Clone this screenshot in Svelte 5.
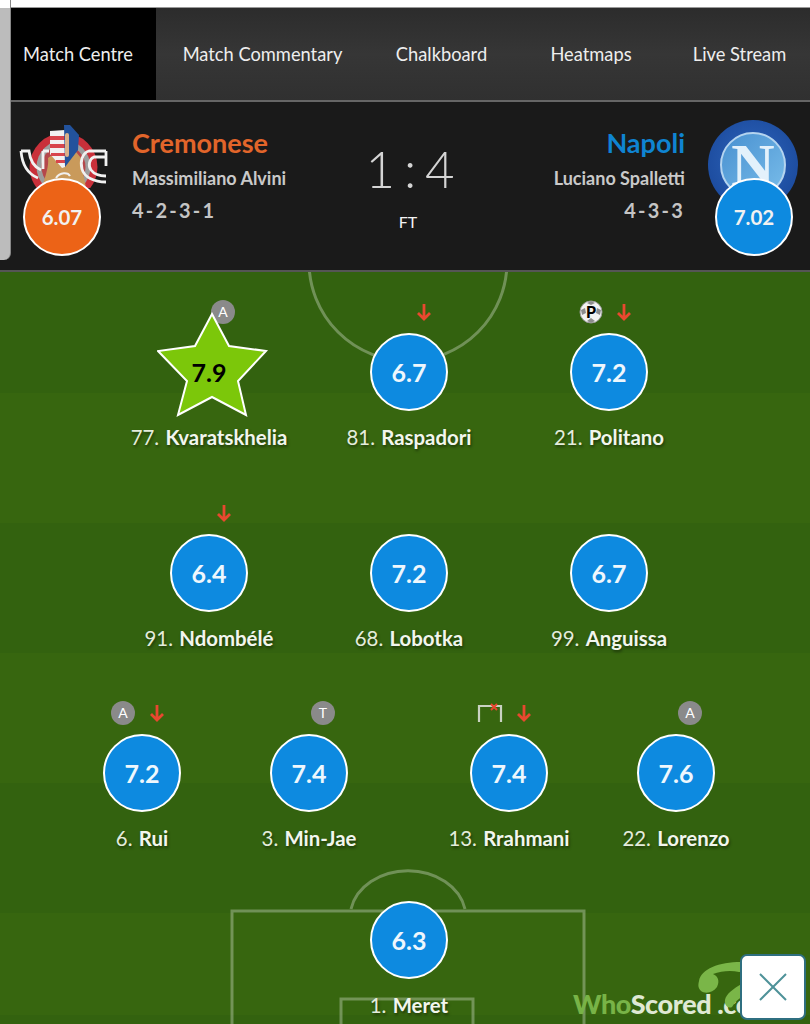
<script>
  const players = [
    { x: 209, y: 372, no: '77', name: 'Kvaratskhelia', rating: '7.9', star: true, icons: [{ k: 'A', d: 14 }] },
    { x: 409, y: 372, no: '81', name: 'Raspadori', rating: '6.7', icons: [{ k: 'arrow', d: 15 }] },
    { x: 609, y: 372, no: '21', name: 'Politano', rating: '7.2', icons: [{ k: 'ball', d: -18 }, { k: 'arrow', d: 15 }] },
    { x: 209, y: 573, no: '91', name: 'Ndombélé', rating: '6.4', icons: [{ k: 'arrow', d: 15 }] },
    { x: 409, y: 573, no: '68', name: 'Lobotka', rating: '7.2', icons: [] },
    { x: 609, y: 573, no: '99', name: 'Anguissa', rating: '6.7', icons: [] },
    { x: 142, y: 773, no: '6', name: 'Rui', rating: '7.2', icons: [{ k: 'A', d: -19 }, { k: 'arrow', d: 15 }] },
    { x: 309, y: 773, no: '3', name: 'Min-Jae', rating: '7.4', icons: [{ k: 'T', d: 14 }] },
    { x: 509, y: 773, no: '13', name: 'Rrahmani', rating: '7.4', icons: [{ k: 'post', d: -19 }, { k: 'arrow', d: 15 }] },
    { x: 676, y: 773, no: '22', name: 'Lorenzo', rating: '7.6', icons: [{ k: 'A', d: 14 }] },
    { x: 409, y: 940, no: '1', name: 'Meret', rating: '6.3', icons: [] }
  ];
  const tabs = ['Match Centre', 'Match Commentary', 'Chalkboard', 'Heatmaps', 'Live Stream'];
</script>

<div class="page">
  <div class="topstrip"></div>
  <div class="side"></div>

  <nav class="tabs">
    {#each tabs as t, i}
      <div class="tab" class:active={i === 0}>{t}</div>
    {/each}
  </nav>

  <header class="match">
    <div class="team home">
      <div class="crest">
        <svg width="92" height="66" viewBox="0 0 92 66">
          <circle cx="45.5" cy="45" r="34" fill="#c9303a" />
          <circle cx="45.5" cy="45" r="27" fill="#9d9d9d" />
          <circle cx="45.5" cy="45" r="22" fill="#b5474b" />
          <path d="M30 36 L38 30 L58 30 L63 36 C62 44 66 52 68 66 L24 66 C28 52 31 44 30 36 Z" fill="#c99a5b" />
          <path d="M32 9 L47 8 L47 45 L44 46 L32 32 Z" fill="#f2f2f2" />
          <path d="M32 14h15v4H32zM32 22h15v4H32zM33 31h14v3H33zM38 38h9v3h-9z" fill="#d8454c" />
          <path d="M46 3 L52 3 L61 13 L60 28 L47 45 Z" fill="#22529c" />
          <rect x="47" y="11" width="4" height="24" rx="2" fill="#d9b08a" />
          <path d="M3 29 C4 42 10 52 20 56 M3 29 H11 C12 38 16 45 23 48 M25 29 V47 M25 29 H31" fill="none" stroke="#f1f1f1" stroke-width="2.8" />
          <path d="M38 56 C42 50 50 50 52 54" fill="none" stroke="#f1f1f1" stroke-width="2" />
          <path d="M88 29 H71 C64 31 62 40 64 47 C66 55 76 60 88 60 M88 29 V44 M88 35 H76 C71 37 70 44 73 48 C76 52 81 54 88 54" fill="none" stroke="#f1f1f1" stroke-width="2.8" />
        </svg>
      </div>
      <div class="rating-badge orange">6.07</div>
      <div class="info">
        <div class="tname orange-t">Cremonese</div>
        <div class="manager">Massimiliano Alvini</div>
        <div class="formation">4-2-3-1</div>
      </div>
    </div>

    <div class="score">
      <div class="goals">1 : 4</div>
      <div class="ft">FT</div>
    </div>

    <div class="team away">
      <div class="info right">
        <div class="tname blue-t">Napoli</div>
        <div class="manager">Luciano Spalletti</div>
        <div class="formation">4-3-3</div>
      </div>
      <div class="crest-n"><div class="n-inner"><span>N</span></div></div>
      <div class="rating-badge blue">7.02</div>
    </div>
  </header>

  <main class="pitch">
    <svg class="lines" width="810" height="752" viewBox="0 272 810 752">
      <g fill="none" stroke="#fff" stroke-opacity="0.3" stroke-width="3">
        <circle cx="408" cy="262" r="99" />
        <path d="M232 1030 V911 H584 V1030" />
        <path d="M341 1030 V999 H473 V1030" />
        <path d="M351 909 A58 47 0 0 1 465 909" />
      </g>
    </svg>

    <div class="brand">
      <svg class="swoosh" width="86" height="50" viewBox="0 0 86 50">
        <path d="M10 20 C12 8 30 1 52 1 L70 1 V12 L50 11 C42 9 32 10 24 13 C29 15 31 20 28 26 C24 32 16 33 12 30 C9 27 9 24 10 20 Z" fill="#7ab648" />
        <path d="M36 39 C37 33 44 28 54 22 L64 22 L62 33 C52 34 47 40 43 46 C39 48 35 44 36 39 Z" fill="#7ab648" />
      </svg>
      <span class="who">Who</span><span class="scored">Scored</span><span class="dom">.com</span>
    </div>

    {#each players as p}
      <div class="player" style="left:{p.x - 100}px;top:{p.y - 272 - 73}px">
        <div class="marks">
          {#each p.icons as ic}
            <span class="mark" style="left:{100 + ic.d}px">
              {#if ic.k === 'arrow'}
                <svg width="16" height="18" viewBox="0 0 16 18"><path d="M8 1 V16 M2 10 L8 16 L14 10" fill="none" stroke="#e8482f" stroke-width="2.8" /></svg>
              {:else if ic.k === 'ball'}
                <span class="ball">
                  <svg width="24" height="24" viewBox="0 0 24 24">
                    <circle cx="12" cy="12" r="11" fill="#f2f2f2" stroke="#9a9a9a" />
                    <path d="M2 10 L6 8 L7 13 L3 15 Z M22 10 L18 8 L17 13 L21 15 Z M8 21 L12 18 L16 21 L12 23 Z M8 3 L12 1 L16 3 L12 5 Z" fill="#8c8c8c" />
                  </svg>
                  <i>P</i>
                </span>
              {:else if ic.k === 'post'}
                <svg width="26" height="20" viewBox="0 0 26 20"><path d="M2 19 V3 H24 V19" fill="none" stroke="#c9d2c2" stroke-width="2.2" /><path d="M14 1 L20 7 M20 1 L14 7" stroke="#e8452e" stroke-width="2" /></svg>
              {:else}
                <span class="letter">{ic.k}</span>
              {/if}
            </span>
          {/each}
        </div>
        {#if p.star}
          <div class="star">
            <svg width="112" height="106" viewBox="0 0 112 106">
              <path d="M55 2 L72 34 L109 39 L81 69 L89 103 L55 85 L21 103 L30 69 L1 39 L38 34 Z" fill="#7cc70a" stroke="#fff" stroke-width="2" />
            </svg>
            <span class="star-v">{p.rating}</span>
          </div>
        {:else}
          <div class="circle">{p.rating}</div>
        {/if}
        <div class="pname"><span class="no">{p.no}.</span> <b>{p.name}</b></div>
      </div>
    {/each}

    <button class="close" aria-label="Close">
      <svg width="28" height="28" viewBox="0 0 28 28"><path d="M1 1 L27 27 M27 1 L1 27" stroke="#4f9299" stroke-width="2" /></svg>
    </button>
  </main>
</div>

<style>
  :global(body) { margin: 0; background: #fff; }
  .page {
    position: relative;
    width: 810px;
    height: 1024px;
    overflow: hidden;
    font-family: Lato, "Noto Sans", sans-serif;
    display: flex;
    flex-direction: column;
  }
  .topstrip { height: 8px; flex: none; background: #fff; box-shadow: inset 0 -1px 0 #999; }
  .side {
    position: absolute; left: 0; top: 0; width: 10px; height: 260px;
    background: linear-gradient(#fff 8px, #bcbcbc 8px);
    border-right: 1px solid #888; border-bottom-right-radius: 7px; z-index: 3;
  }
  .tabs {
    flex: none; height: 92px; display: grid;
    grid-template-columns: 11px 145px 213px 145px 154px 143px;
    background: linear-gradient(#2c2c2c, #363636 50%, #303030);
    border-bottom: 2px solid #666;
  }
  .tab {
    color: #eee; font-size: 18.3px; line-height: 92px; text-align: center; white-space: nowrap;
  }
  .tab:first-child { grid-column: 2; padding-left: 12px; padding-right: 23px; background: #000; text-align: left; }
  .match {
    flex: none; height: 168px;
    background: #1a1a1a;
    border-bottom: 2px solid #555;
    display: flex;
  }
  .team { position: relative; display: flex; flex: none; }
  .team.home { width: 325px; }
  .team.away { width: 319px; }
  .crest { position: absolute; left: 18px; top: 20px; }
  .crest-n {
    position: absolute; left: 217px; top: 18px; width: 90px; height: 90px; border-radius: 50%;
    background: radial-gradient(circle at 50% 45%, #2f66bd, #1d4da0 70%, #15346c);
    display: flex; align-items: center; justify-content: center;
  }
  .n-inner {
    width: 62px; height: 62px; border-radius: 50%; border: 2px solid #b4d4ef;
    background: linear-gradient(135deg, #4890d0, #79bdea);
    display: flex; justify-content: center; overflow: hidden;
  }
  .n-inner span { font: bold 60px/62px "Liberation Serif", serif; color: #e3f1fb; }
  .rating-badge {
    position: absolute; top: 76px; width: 74px; height: 74px; border: 2px solid #fff; border-radius: 50%;
    display: flex; align-items: center; justify-content: center;
    color: #f1f1f1; font-size: 20.5px; font-weight: 700;
  }
  .rating-badge.orange { left: 23px; background: #ec6317; }
  .rating-badge.blue { left: 224px; background: #0d8ae0; }
  .info { margin-left: 132px; padding-top: 22px; display: flex; flex-direction: column; }
  .info.right { margin-left: 0; width: 194px; align-items: flex-end; }
  .tname { font-size: 27px; line-height: 38px; font-weight: 700; }
  .orange-t { color: #e2652a; }
  .blue-t { color: #0f84d2; }
  .manager { margin-top: 1px; font-size: 18px; line-height: 30px; font-weight: 700; color: #c9c9c9; }
  .formation { margin-top: 1px; font-size: 20px; line-height: 32px; letter-spacing: 2.2px; font-weight: 700; color: #c4c4c4; }
  .score { width: 166px; flex: none; text-align: center; color: #d4d4d4; padding-top: 37px; }
  .goals { padding-left: 4px; font-size: 51px; line-height: 60px; font-weight: 300; word-spacing: -5px; }
  .ft { margin-top: 13px; font-size: 16px; line-height: 20px; color: #f3f3f3; }
  .pitch {
    position: relative; flex: 1;
    background: repeating-linear-gradient(#33620f 0 130px, #37660f 130px 260px);
    background-position: 0 -9px;
  }
  .lines { position: absolute; left: 0; top: 0; }
  .player {
    position: absolute; width: 200px; display: flex; flex-direction: column; align-items: center;
    padding-top: 34px;
  }
  .marks { position: absolute; left: 0; top: 0; width: 200px; height: 26px; }
  .mark { position: absolute; top: 0; transform: translateX(-50%); display: flex; align-items: center; justify-content: center; height: 26px; }
  .letter {
    width: 24px; height: 24px; border-radius: 50%; background: #8a8a8a; color: #fff;
    font-size: 14px; line-height: 24px; text-align: center;
  }
  .ball { position: relative; width: 24px; height: 24px; display: block; }
  .ball svg { display: block; }
  .ball i {
    position: absolute; left: 0; right: 0; top: 0; font-style: normal;
    color: #000; font-size: 16px; line-height: 24px; font-weight: 900; text-align: center;
  }
  .circle {
    width: 74px; height: 74px; border: 2px solid #fff; border-radius: 50%; background: #0d8ae0;
    display: flex; align-items: center; justify-content: center;
    color: #eef7fd; font-size: 25px; font-weight: 700;
  }
  .star { position: relative; width: 78px; height: 78px; }
  .star svg { position: absolute; left: -13px; top: -21px; }
  .star-v {
    position: absolute; left: 0; right: 0; top: 0; line-height: 78px; text-align: center;
    color: #000; font-size: 25px; font-weight: 700;
  }
  .pname {
    margin-top: 14px; font-size: 20.4px; line-height: 24px; color: #e4ecdc; white-space: nowrap;
    text-shadow: 1px 2px 3px rgba(0,0,0,.45);
  }
  .pname .no { font-weight: 400; margin-right: 1px; }
  .pname b { font-weight: 700; color: #f2f6ee; }
  .brand { position: absolute; left: 573px; top: 717px; font-size: 27px; line-height: 30px; font-weight: 900; white-space: nowrap; letter-spacing: -0.4px; }
  .swoosh { position: absolute; left: 116px; top: -28px; }
  .who { color: #78b347; }
  .scored { color: #dfe9d4; }
  .dom { color: #dfe9d4; margin-left: 6px; }
  .close {
    position: absolute; left: 740px; top: 682px; width: 66px; height: 66px; padding: 0;
    background: #fff; border: 2px solid #2f6f80; border-radius: 7px;
    display: flex; align-items: center; justify-content: center;
  }
</style>
